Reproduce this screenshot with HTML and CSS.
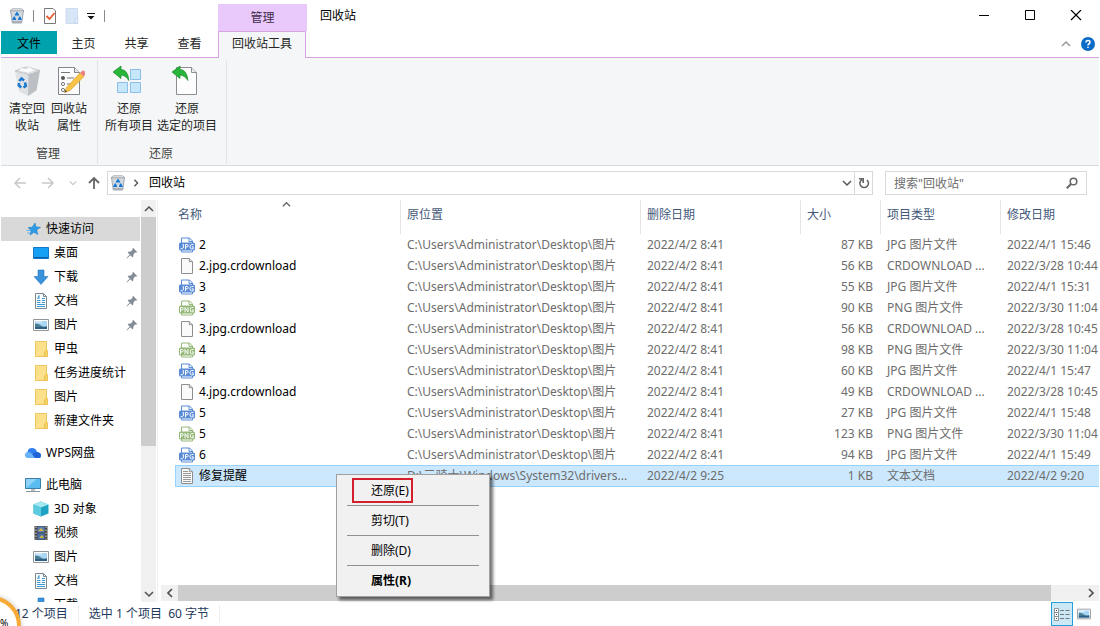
FILE: index.html
```html
<!DOCTYPE html>
<html lang="zh-CN">
<head>
<meta charset="utf-8">
<title>回收站</title>
<link rel="stylesheet" href="styles.css">
</head>
<body>
<svg class="defs" aria-hidden="true">
  <symbol id="bin" viewBox="0 0 16 16">
    <path d="M1.500 2.500l1.800 12.500h9.400l1.800-12.500z" fill="#d3d9df" stroke="#9aa0a8" stroke-width=".9"/>
    <path d="M3 13h10v2H3z" fill="#a9afb5"/>
    <path d="M1 2.800L3.500.8h9L15 2.800z" fill="#eceeef" stroke="#979ca1" stroke-width=".8"/>
    <path d="M6.400 7.600L8 5.200l1.600 2.400M10.300 8.600l1.300 2.600H9M5.700 8.600l-1.300 2.600H7" fill="none" stroke="#1677d2" stroke-width="1.800"/>
  </symbol>
  <symbol id="bin-big" viewBox="0 0 32 32">
    <path d="M4 6l14 3.500L17 31l-9-4.500z" fill="#dfe2e5"/>
    <path d="M17.500 9.500L29 5.500l-3.500 20L17 31z" fill="#bcc0c5"/>
    <path d="M4 6l14 3.500L29 5.500 15 2z" fill="#eceef0" stroke="#b5b9be" stroke-width=".8"/>
    <path d="M7 6l4-3.500 4 1.500 3-2.500 4 2.500 4 .8-8.500 3.400z" fill="#fafbfc" stroke="#c9cdd1" stroke-width=".7"/>
    <path d="M8.300 16l2.200-2.500 2.500 2M14 17.500l.8 3.500-2.300 1.500M10.300 22.500L7.800 20.500l.2-2.500" fill="none" stroke="#1b78d0" stroke-width="2.600"/>
  </symbol>
  <symbol id="props" viewBox="0 0 32 32">
    <path d="M5.500 2.500h16l5 5v22h-21z" fill="#fcfcfc" stroke="#82868a"/>
    <path d="M21.500 2.500v5h5" fill="#e5e7e9" stroke="#82868a"/>
    <path d="M8 7.500h9M14 13h7M14 19h6M14 25h3" stroke="#777"/>
    <circle cx="10" cy="13" r="2" fill="#555"/><circle cx="10" cy="19" r="1.600" fill="#fff" stroke="#777"/><circle cx="10" cy="25" r="1.600" fill="#fff" stroke="#777"/>
    <path d="M11.500 27.500l2-5L27 8l4 3.500L17 25.500z" fill="#f8c445" stroke="#dd9e2c" stroke-width=".7"/>
    <path d="M27 8l2-2q2-1 2.600.2t.3 3.300L31 11.500z" fill="#e88080"/><path d="M11.500 27.500l1-2.500 1.600 1.500z" fill="#444"/>
  </symbol>
  <symbol id="restore-all" viewBox="0 0 32 32">
    <path d="M17.500 4.500h10v10h-10zM4.500 17.500h10v10h-10zM17.500 17.500h10v10h-10z" fill="#c5e6fb" stroke="#8bbfe6"/>
    <path d="M0 7l8-6v3.500q7 0 7.800 11Q13 10.500 8 10v3.500z" fill="#29b43a" stroke="#148a27" stroke-width=".7"/>
  </symbol>
  <symbol id="restore-one" viewBox="0 0 32 32">
    <path d="M5.500 2.500h15l5 5v22h-20z" fill="#fdfdfd" stroke="#8b8f93"/>
    <path d="M20.500 2.500v5h5" fill="#eceeef" stroke="#8b8f93"/>
    <path d="M1 7l8-6v3.500q7 0 7.800 11Q14 10.500 9 10v3.500z" fill="#29b43a" stroke="#148a27" stroke-width=".7"/>
  </symbol>
  <symbol id="pin" viewBox="0 0 12 12">
    <path d="M7 .8L11.200 5l-1 .6-.9-.1L7.500 7.300 7.300 9.600l-.8.8L4.400 8.200.8 11.400l-.3-.3L3.700 7.500 1.600 5.400l.8-.7 2.300-.2 1.900-1.800-.2-1z" fill="#848d96"/>
  </symbol>
  <symbol id="picture" viewBox="0 0 16 16">
    <path d="M.5 2.500h15v11H.5z" fill="#fff" stroke="#8f969c"/>
    <path d="M2 4h12v8H2z" fill="#a8d6f4"/><path d="M2 6.500q4 0 6 2t6 .5V12H2z" fill="#4a7f96"/><path d="M2 10h12v2H2z" fill="#2d5f86"/><path d="M3 5h6" stroke="#eef8fe"/>
  </symbol>
  <symbol id="doc" viewBox="0 0 16 16">
    <path d="M2.500.5h8l3 3v12h-11z" fill="#fff" stroke="#7d868c"/><path d="M10.500.5v3h3" fill="none" stroke="#7d868c"/>
    <path d="M4 7.500h3.500M9 5.500h3M9 7.500h3M4 9.500h3.500M9 9.500h3M4 11.500h8M4 13.500h8" stroke="#3d97d2"/><path d="M4.500 6l1.500-3.500V6" fill="none" stroke="#3d97d2"/>
  </symbol>
  <symbol id="folder" viewBox="0 0 16 16">
    <path d="M2 .5h12v15H2z" fill="#fde08a"/><path d="M2.500.5h11v15H2.500z" fill="none" stroke="#edc75e"/><path d="M11.700 15.500V11l1.300-1.500h1.500v6z" fill="#f8d264" stroke="#e3b63e" stroke-width=".7"/>
  </symbol>
  <symbol id="arrow-down" viewBox="0 0 16 16"><path d="M5 1h6v6.500h4L8 15.500 1 7.500h4z" fill="#3a92dc" stroke="#2a78bd" stroke-width=".6"/></symbol>
  <symbol id="file" viewBox="0 0 16 16"><path d="M2.500.5h7.800l3.200 3.200v11.800h-11z" fill="#fafafa" stroke="#8e8e8e"/><path d="M10.300.5v3.200h3.200" fill="#e6e6e6" stroke="#8e8e8e"/></symbol>
  <symbol id="text-file" viewBox="0 0 16 16"><path d="M2.500.5h7.800l3.200 3.200v11.800h-11z" fill="#fafafa" stroke="#8e8e8e"/><path d="M10.300.5v3.200h3.200" fill="#e6e6e6" stroke="#8e8e8e"/><path d="M4 3.500h5M4 5.500h8M4 7.500h8M4 9.500h8M4 11.500h8M4 13.500h8" stroke="#999"/></symbol>
  <symbol id="jpg" viewBox="0 0 16 16">
    <path d="M2.500 7V1h8l3 3v3M2.500 12v3h11v-3" fill="#fff" stroke="#5a8bd6"/><path d="M10 1v3.500h3.500" fill="none" stroke="#5a8bd6"/>
    <rect x="0" y="5.500" width="16" height="8" rx="1.500" fill="#5a8bd6"/>
    <path d="M4.300 7v4q0 1-2.800.8M6.500 12.300V7.500h1.700q1 0 1 1.200t-1 1.200H6.500M14.500 7.500h-2q-1.500 0-1.500 2.200t1.500 2.200h1.700V9.800h-1.400" fill="none" stroke="#fff"/>
  </symbol>
  <symbol id="png" viewBox="0 0 16 16">
    <path d="M2.500 7V1h8l3 3v3M2.500 12v3h11v-3" fill="#fff" stroke="#94b878"/><path d="M10 1v3.500h3.500" fill="none" stroke="#94b878"/>
    <rect x="0" y="5.500" width="16" height="8" rx="1.500" fill="#94b878"/>
    <path d="M1.500 12.300V7.500h1.700q1 0 1 1.200t-1 1.200H1.500M6 12.300V7.500l3 4.500V7M14.500 7.500h-1.700q-1.500 0-1.500 2.200t1.500 2.200h1.400V9.800h-1" fill="none" stroke="#fff"/>
  </symbol>
  <symbol id="chev-up" viewBox="0 0 10 10"><path d="M1 7l4-4 4 4" fill="none" stroke="currentColor" stroke-width="1.500"/></symbol>
  <symbol id="chev-down" viewBox="0 0 10 10"><path d="M1 3l4 4 4-4" fill="none" stroke="currentColor" stroke-width="1.500"/></symbol>
  <symbol id="chev-left" viewBox="0 0 10 10"><path d="M7 1L3 5l4 4" fill="none" stroke="currentColor" stroke-width="1.700"/></symbol>
  <symbol id="chev-right" viewBox="0 0 10 10"><path d="M3 1l4 4-4 4" fill="none" stroke="currentColor" stroke-width="1.700"/></symbol>
</svg>

<header class="titlebar">
  <div class="quick">
    <svg class="i16"><use href="#bin"/></svg>
    <span class="sep"></span>
    <button class="bare" aria-label="属性"><svg class="i16" viewBox="0 0 16 16"><path d="M2.500.5h8.500l2.500 2.500v12.500h-11z" fill="#fff" stroke="#777"/><path d="M4.500 8l3 3 5-6" fill="none" stroke="#e2592d" stroke-width="1.800"/></svg></button>
    <button class="bare" aria-label="新建文件夹"><svg class="i16" viewBox="0 0 16 16"><path d="M2 .5h11.500v15H2z" fill="#d8e6f8" stroke="#c4d5ec" stroke-width=".8"/><path d="M11 15.500v-5h3v5z" fill="#e3edfa" stroke="#bccfe8" stroke-width=".7"/></svg></button>
    <button class="bare" aria-label="自定义快速访问工具栏"><svg class="i10" viewBox="0 0 10 10"><path d="M1 2.500h8" stroke="#111"/><path d="M1.500 5h7L5 8.500z" fill="#111"/></svg></button>
    <span class="sep"></span>
  </div>
  <div class="context-label">管理</div>
  <div class="title">回收站</div>
  <div class="window-buttons">
    <button class="bare" aria-label="最小化"><svg class="i12" viewBox="0 0 12 12"><path d="M1 5.500h10" stroke="#000"/></svg></button>
    <button class="bare" aria-label="最大化"><svg class="i12" viewBox="0 0 12 12"><path d="M1.500.5h9v9h-9z" fill="none" stroke="#000"/></svg></button>
    <button class="bare" aria-label="关闭"><svg class="i12" viewBox="0 0 12 12"><path d="M1 0l10 10M11 0L1 10" stroke="#000" stroke-width="1.200"/></svg></button>
  </div>
</header>

<nav class="tabs">
  <button class="tab file">文件</button>
  <button class="tab">主页</button>
  <button class="tab">共享</button>
  <button class="tab">查看</button>
  <button class="tab active">回收站工具</button>
  <div class="help">
    <button class="bare collapse" aria-label="折叠功能区"><svg class="i10"><use href="#chev-up"/></svg></button>
    <button class="bare" aria-label="帮助"><svg class="i14" viewBox="0 0 14 14"><circle cx="7" cy="7" r="7" fill="#0b6cc8"/><path d="M5 5.500Q5 3.500 7 3.500t2 1.700Q9 6.300 7.800 7 7 7.500 7 8.500M7 9.700v1.400" fill="none" stroke="#fff" stroke-width="1.500"/></svg></button>
  </div>
</nav>

<section class="ribbon">
  <div class="group">
    <div class="tools">
      <button class="tool"><svg class="i32"><use href="#bin-big"/></svg>清空回<br>收站</button>
      <button class="tool"><svg class="i32"><use href="#props"/></svg>回收站<br>属性</button>
    </div>
    <div class="group-name">管理</div>
  </div>
  <div class="group">
    <div class="tools">
      <button class="tool wide"><svg class="i32"><use href="#restore-all"/></svg>还原<br>所有项目</button>
      <button class="tool wider"><svg class="i32"><use href="#restore-one"/></svg>还原<br>选定的项目</button>
    </div>
    <div class="group-name">还原</div>
  </div>
</section>

<div class="address-row">
  <div class="nav-buttons">
    <button class="bare off" aria-label="后退"><svg class="i14" viewBox="0 0 14 14"><path d="M13 7H2M7 2L2 7l5 5" fill="none" stroke="currentColor" stroke-width="1.500"/></svg></button>
    <button class="bare off" aria-label="前进"><svg class="i14" viewBox="0 0 14 14"><path d="M1 7h11M7 2l5 5-5 5" fill="none" stroke="currentColor" stroke-width="1.500"/></svg></button>
    <button class="bare off small" aria-label="最近浏览的位置"><svg class="i8"><use href="#chev-down"/></svg></button>
    <button class="bare up" aria-label="上移"><svg class="i14" viewBox="0 0 14 14"><path d="M7 13V2M2 7l5-5 5 5" fill="none" stroke="currentColor" stroke-width="1.800"/></svg></button>
  </div>
  <div class="address">
    <svg class="i16"><use href="#bin"/></svg>
    <svg class="i8 crumb"><use href="#chev-right"/></svg>
    <span class="place">回收站</span>
    <button class="bare" aria-label="历史记录"><svg class="i10"><use href="#chev-down"/></svg></button>
    <button class="bare refresh" aria-label="刷新"><svg class="i12" viewBox="0 0 12 12"><path d="M9 3A4.300 4.300 0 1 1 4 2.500M1 1.800h4.200V6" fill="none" stroke="#666" stroke-width="1.600"/></svg></button>
  </div>
  <div class="search">
    <input type="text" aria-label="搜索" placeholder='搜索"回收站"'>
    <svg class="i12" viewBox="0 0 12 12"><circle cx="7.500" cy="4.500" r="3.300" fill="none" stroke="#666" stroke-width="1.500"/><path d="M5 7L.8 11.200" stroke="#666" stroke-width="2"/></svg>
  </div>
</div>

<main class="main">
  <aside class="side">
    <ul class="tree">
      <li class="root current"><svg class="i16" viewBox="0 0 16 16"><path d="M10 2l1 4 4.500.3-3.800 2.600 1.100 4.600L9 11.300 5 14l1.200-4.600L3 6.600l4.200-.3z" fill="#2e9be6" stroke="#1f7fc6" stroke-width=".6"/><path d="M1.500 9.500h4M2.500 12h3" stroke="#5bb3ee"/></svg>快速访问</li>
      <li><svg class="i16" viewBox="0 0 16 16"><path d="M.5 2.500h15v11H.5z" fill="#159ff5" stroke="#1278c8"/><path d="M1 12.500h14" stroke="#0b5ea6"/></svg>桌面<svg class="pin"><use href="#pin"/></svg></li>
      <li><svg class="i16"><use href="#arrow-down"/></svg>下载<svg class="pin"><use href="#pin"/></svg></li>
      <li><svg class="i16"><use href="#doc"/></svg>文档<svg class="pin"><use href="#pin"/></svg></li>
      <li><svg class="i16"><use href="#picture"/></svg>图片<svg class="pin"><use href="#pin"/></svg></li>
      <li><svg class="i16"><use href="#folder"/></svg>甲虫</li>
      <li><svg class="i16"><use href="#folder"/></svg>任务进度统计</li>
      <li><svg class="i16"><use href="#folder"/></svg>图片</li>
      <li><svg class="i16"><use href="#folder"/></svg>新建文件夹</li>
      <li class="root gap"><svg class="i16" viewBox="0 0 16 16"><path d="M3 13a3 3 0 0 1-.5-5.800Q3 3 7 3t5 4q4 .5 4 3.500T13 13z" fill="#2f7ff0"/><path d="M3 13a3 3 0 0 1 0-6q3 0 5 3l2.500 3z" fill="#6ab4fb"/><path d="M7.500 9.500Q9 7 12 7q4 .5 4 3.500T13 13h-3z" fill="#1f62d8"/></svg>WPS网盘</li>
      <li class="root gap"><svg class="i16" viewBox="0 0 16 16"><path d="M.5 1.500h15v10H.5z" fill="#5bbcf2" stroke="#3b7ea6"/><path d="M1 11L12 2H1z" fill="#8fd4f8"/><path d="M6 12h4v2H6z" fill="#b8c0c6"/><path d="M1 14.500h14" stroke="#8c979e"/></svg>此电脑</li>
      <li><svg class="i16" viewBox="0 0 16 16"><path d="M8 .5l7.500 3v9L8 15.500l-7.500-3v-9z" fill="#1fa3c4"/><path d="M.5 3.500l7.500 3 7.500-3L8 .5z" fill="#a4e8f2"/><path d="M.5 3.500l7.500 3v9l-7.500-3z" fill="#5ccbe0"/></svg>3D 对象</li>
      <li><svg class="i16" viewBox="0 0 16 16"><path d="M1.500 1h13v14h-13z" fill="#444"/><path d="M4.500 1.500h7v6h-7z" fill="#5a7fb4"/><path d="M4.500 8.500h7v6h-7z" fill="#4a72a8"/><path d="M5 6l3-3 3 3zM6 13l3-3 2 3z" fill="#d9b23c"/><path d="M3 1.500v13M13 1.500v13" stroke="#ddd" stroke-dasharray="1.500 1.500"/></svg>视频</li>
      <li><svg class="i16"><use href="#picture"/></svg>图片</li>
      <li><svg class="i16"><use href="#doc"/></svg>文档</li>
      <li><svg class="i16"><use href="#arrow-down"/></svg>下载</li>
    </ul>
    <div class="vscroll">
      <button class="bare" aria-label="向上滚动"><svg class="i10"><use href="#chev-up"/></svg></button>
      <div class="vthumb"></div>
      <div class="vrest"></div>
      <button class="bare" aria-label="向下滚动"><svg class="i10"><use href="#chev-down"/></svg></button>
    </div>
  </aside>

  <section class="content">
    <div class="list">
      <table class="files">
        <colgroup><col class="c-name"><col class="c-from"><col class="c-deleted"><col class="c-size"><col class="c-type"><col></colgroup>
        <thead><tr><th>名称<svg class="sort"><use href="#chev-up"/></svg></th><th>原位置</th><th>删除日期</th><th>大小</th><th>项目类型</th><th>修改日期</th></tr></thead>
        <tbody>
          <tr><td><span class="name"><svg class="i16"><use href="#jpg"/></svg>2</span></td><td>C:\Users\Administrator\Desktop\图片</td><td>2022/4/2 8:41</td><td>87 KB</td><td>JPG 图片文件</td><td>2022/4/1 15:46</td></tr>
          <tr><td><span class="name"><svg class="i16"><use href="#file"/></svg>2.jpg.crdownload</span></td><td>C:\Users\Administrator\Desktop\图片</td><td>2022/4/2 8:41</td><td>56 KB</td><td>CRDOWNLOAD ...</td><td>2022/3/28 10:44</td></tr>
          <tr><td><span class="name"><svg class="i16"><use href="#jpg"/></svg>3</span></td><td>C:\Users\Administrator\Desktop\图片</td><td>2022/4/2 8:41</td><td>55 KB</td><td>JPG 图片文件</td><td>2022/4/1 15:31</td></tr>
          <tr><td><span class="name"><svg class="i16"><use href="#png"/></svg>3</span></td><td>C:\Users\Administrator\Desktop\图片</td><td>2022/4/2 8:41</td><td>90 KB</td><td>PNG 图片文件</td><td>2022/3/30 11:04</td></tr>
          <tr><td><span class="name"><svg class="i16"><use href="#file"/></svg>3.jpg.crdownload</span></td><td>C:\Users\Administrator\Desktop\图片</td><td>2022/4/2 8:41</td><td>56 KB</td><td>CRDOWNLOAD ...</td><td>2022/3/28 10:45</td></tr>
          <tr><td><span class="name"><svg class="i16"><use href="#png"/></svg>4</span></td><td>C:\Users\Administrator\Desktop\图片</td><td>2022/4/2 8:41</td><td>98 KB</td><td>PNG 图片文件</td><td>2022/3/30 11:04</td></tr>
          <tr><td><span class="name"><svg class="i16"><use href="#jpg"/></svg>4</span></td><td>C:\Users\Administrator\Desktop\图片</td><td>2022/4/2 8:41</td><td>60 KB</td><td>JPG 图片文件</td><td>2022/4/1 15:47</td></tr>
          <tr><td><span class="name"><svg class="i16"><use href="#file"/></svg>4.jpg.crdownload</span></td><td>C:\Users\Administrator\Desktop\图片</td><td>2022/4/2 8:41</td><td>49 KB</td><td>CRDOWNLOAD ...</td><td>2022/3/28 10:45</td></tr>
          <tr><td><span class="name"><svg class="i16"><use href="#jpg"/></svg>5</span></td><td>C:\Users\Administrator\Desktop\图片</td><td>2022/4/2 8:41</td><td>27 KB</td><td>JPG 图片文件</td><td>2022/4/1 15:48</td></tr>
          <tr><td><span class="name"><svg class="i16"><use href="#png"/></svg>5</span></td><td>C:\Users\Administrator\Desktop\图片</td><td>2022/4/2 8:41</td><td>123 KB</td><td>PNG 图片文件</td><td>2022/3/30 11:04</td></tr>
          <tr><td><span class="name"><svg class="i16"><use href="#jpg"/></svg>6</span></td><td>C:\Users\Administrator\Desktop\图片</td><td>2022/4/2 8:41</td><td>94 KB</td><td>JPG 图片文件</td><td>2022/4/1 15:49</td></tr>
          <tr class="selected"><td><span class="name"><svg class="i16"><use href="#text-file"/></svg>修复提醒</span></td><td>D:\三骑士\Windows\System32\drivers...</td><td>2022/4/2 9:25</td><td>1 KB</td><td>文本文档</td><td>2022/4/2 9:20</td></tr>
        </tbody>
      </table>
    </div>
    <div class="hscroll">
      <button class="bare" aria-label="向左滚动"><svg class="i10"><use href="#chev-left"/></svg></button>
      <div class="hthumb"></div>
      <div class="hrest"></div>
      <button class="bare" aria-label="向右滚动"><svg class="i10"><use href="#chev-right"/></svg></button>
    </div>
  </section>
</main>

<footer class="status">
  <span class="count">12 个项目</span>
  <span class="picked">选中 1 个项目&nbsp; 60 字节</span>
  <div class="views">
    <button class="view on" aria-label="详细信息"><svg class="i16" viewBox="0 0 16 16"><path d="M.5 2.500h4v4h-4zM.5 6.500h4v4h-4zM.5 10.500h4v4h-4z" fill="#fff" stroke="#8a8f94" stroke-width=".9"/><path d="M2 4.500h1M2 8.500h1M2 12.500h1" stroke="#444"/><path d="M6 4.500h4M11.500 4.500h4M6 8.500h4M11.500 8.500h4M6 12.500h4M11.500 12.500h4" stroke="#777"/></svg></button>
    <button class="view" aria-label="大缩略图"><svg class="i14"><use href="#picture"/></svg></button>
  </div>
</footer>

<div class="menu" role="menu">
  <button class="menu-item framed" role="menuitem">还原(E)</button>
  <hr>
  <button class="menu-item" role="menuitem">剪切(T)</button>
  <hr>
  <button class="menu-item" role="menuitem">删除(D)</button>
  <hr>
  <button class="menu-item strong" role="menuitem">属性(R)</button>
</div>

<div class="gauge">%</div>
</body>
</html>
```
FILE: styles.css
```css
* { box-sizing: border-box; }
html { height: 100%; }
body {
  margin: 0;
  padding: 0 1px;
  height: 100%;
  display: flex;
  flex-direction: column;
  position: relative;
  overflow: hidden;
  background: #fff;
  color: #000;
  font: 12px/17px "Noto Sans", "Noto Sans CJK SC", sans-serif;
}
button, input { font: inherit; color: inherit; }
svg { display: block; flex: none; }
.defs { position: absolute; width: 0; height: 0; }
.bare {
  display: flex;
  align-items: center;
  justify-content: center;
  padding: 0;
  border: 0;
  background: none;
}
.i8 { width: 8px; height: 8px; }
.i10 { width: 10px; height: 10px; }
.i12 { width: 12px; height: 12px; }
.i14 { width: 14px; height: 14px; }
.i16 { width: 16px; height: 16px; }
.i32 { width: 32px; height: 32px; }

/* title bar */
.titlebar { display: flex; height: 31px; flex: none; }
.quick {
  display: flex;
  align-items: center;
  gap: 8px;
  width: 217px;
  padding-left: 8px;
}
.quick .sep { width: 1px; height: 12px; background: #8c8c8c; }
.quick .bare + .bare { margin-left: -2px; }
.context-label {
  width: 89px;
  margin-top: 4px;
  padding-top: 5px;
  background: #e9c9fc;
  color: #3d2b4a;
  text-align: center;
}
.title { flex: 1; padding: 7px 13px; }
.window-buttons { display: flex; }
.window-buttons .bare { width: 46px; }

/* ribbon tabs */
.tabs { display: flex; height: 27px; flex: none; border-bottom: 1px solid #d7a3e3; }
.tab {
  width: 53px;
  height: 24px;
  padding: 1px 0 0;
  border: 0;
  background: none;
  color: #262626;
}
.tab.file { width: 56px; height: 23px; background: #00a3ad; color: #000; }
.tab.active {
  width: 88px;
  height: 27px;
  margin-left: 2px;
  padding: 0 0 3px;
  border: 1px solid #d7a3e3;
  border-bottom: 0;
  background: #f5f6f7;
}
.help { display: flex; gap: 10px; margin-left: auto; padding-right: 4px; }
.collapse { color: #999; }

/* ribbon body */
.ribbon {
  display: flex;
  flex: none;
  padding: 2px 0 1px;
  background: #f5f6f7;
  border-bottom: 1px solid #dadbdc;
}
.group {
  padding: 5px 7px 2px 5px;
  border-right: 1px solid #e2e3e4;
  color: #444;
  text-align: center;
}
.tools { display: flex; }
.tool {
  width: 42px;
  padding: 0;
  border: 0;
  background: none;
  color: #262626;
  white-space: nowrap;
}
.tool svg { margin: 0 auto 3px; }
.tool.wide { width: 52px; }
.tool.wider { width: 64px; }
.group-name { margin-top: 11px; }

/* address row */
.address-row { display: flex; align-items: center; height: 34px; flex: none; padding-right: 12px; }
.nav-buttons { display: flex; width: 106px; padding-left: 12px; gap: 14px; color: #666; }
.nav-buttons .off { color: #c8c8c8; }
.nav-buttons .small { margin-right: -4px; }
.address, .search {
  display: flex;
  align-items: center;
  height: 24px;
  border: 1px solid #d9d9d9;
}
.address { flex: 1; padding-left: 2px; gap: 7px; color: #555; }
.place { flex: 1; margin-left: 2px; padding-bottom: 2px; color: #000; }
.address .refresh { width: 18px; height: 22px; margin-left: -5px; border-left: 1px solid #d9d9d9; }
.crumb { margin-left: -1px; }
.search { width: 202px; margin-left: 12px; padding: 0 8px; }
.search input {
  flex: 1;
  min-width: 0;
  padding: 0;
  border: 0;
  outline: 0;
  background: none;
}
.search input::placeholder { color: #6d6d6d; opacity: 1; }

/* body */
.main { display: flex; flex: 1; min-height: 0; }
.side { display: flex; width: 157px; flex: none; border-right: 1px solid #f0f0f0; }
.tree {
  flex: 1;
  margin: 0;
  padding: 17px 0 0;
  list-style: none;
  overflow: hidden;
}
.tree li {
  display: flex;
  align-items: center;
  gap: 5px;
  height: 24px;
  padding: 0 2px 1px 32px;
}
.tree .root { padding-left: 24px; }
.tree .current { background: #d9d9d9; }
.tree .gap { margin-top: 8px; }
.pin { width: 12px; height: 12px; margin-left: auto; }
.vscroll {
  display: flex;
  flex-direction: column;
  width: 15px;
  margin: 0 1px;
  background: #f0f0f0;
  color: #505050;
}
.vscroll .bare { flex: none; width: 15px; height: 17px; }
.vthumb { flex: 228; background: #cdcdcd; }
.vrest { flex: 139; }
.content { display: flex; flex: 1; min-width: 0; flex-direction: column; padding-left: 3px; }
.list { flex: 1; min-height: 0; padding-left: 14px; overflow: hidden; }

/* file table */
.files { width: 100%; table-layout: fixed; border-collapse: separate; border-spacing: 0; }
.c-name { width: 226px; }
.c-from { width: 240px; }
.c-deleted { width: 160px; }
.c-size { width: 80px; }
.c-type { width: 120px; }
.files th {
  height: 34px;
  padding: 0 6px 5px;
  border-right: 1px solid #e5e5e5;
  color: #43587a;
  font-weight: 400;
  text-align: left;
  position: relative;
}
.files th:first-child { padding-left: 3px; }
.files th:last-child { border-right: 0; }
.sort { position: absolute; left: 107px; top: 0; width: 9px; height: 9px; color: #666; }
.files td {
  height: 21px;
  padding: 0 8px 0 6px;
  color: #6d6d6d;
  white-space: nowrap;
  overflow: hidden;
}
.files td:first-child { padding-left: 4px; color: #000; }
.files td:nth-child(4) { text-align: right; }
.files td:last-child { padding-right: 0; }
.name { display: flex; align-items: center; gap: 4px; }
.files .selected td { height: 22px; padding-bottom: 1px; background: #cce8ff; border: 1px solid #99d1ff; border-width: 1px 0; }
.files .selected td:first-child { border-left-width: 1px; padding-left: 3px; }

.hscroll { display: flex; height: 16px; flex: none; margin-bottom: 1px; background: #f0f0f0; color: #505050; }
.hscroll .bare { flex: none; width: 17px; height: 16px; }
.hthumb { flex: 874; background: #cdcdcd; }
.hrest { flex: 31; }

/* status bar */
.status { display: flex; align-items: center; height: 24px; flex: none; padding-left: 14px; color: #1e395b; }
.count, .picked { margin-bottom: 1px; border-right: 1px solid #eee; }
.count { padding-right: 10px; }
.picked { padding: 0 10px; }
.views { display: flex; margin-left: auto; padding-right: 4px; }
.view {
  display: flex;
  align-items: center;
  justify-content: center;
  width: 22px;
  height: 24px;
  padding: 0;
  border: 1px solid transparent;
  background: none;
}
.view.on { border-color: #26a0da; background: #cbe8f6; }

/* context menu over the list */
.menu {
  position: absolute;
  left: 336px;
  top: 474px;
  width: 154px;
  padding: 3px 10px;
  border: 1px solid #a0a0a0;
  background: #f1f1f1;
  box-shadow: 3px 3px 3px rgba(0, 0, 0, .55);
}
.menu hr { margin: 2px 0; border: 0; border-top: 1px solid #919191; }
.menu-item {
  display: block;
  height: 25px;
  margin-left: 5px;
  padding: 0 3px 0 19px;
  border: 0;
  background: none;
  text-align: left;
}
.menu-item.framed { padding: 0 2px 0 17px; border: 2px solid #d4202c; }
.menu-item.strong { font-weight: 700; }

/* floating gauge at the screen corner */
.gauge {
  position: absolute;
  left: -39px;
  top: 596px;
  width: 60px;
  height: 60px;
  padding: 17px 0 0 35px;
  border: 4px solid #f8aa35;
  border-radius: 50%;
  background: #fff;
  box-shadow: 0 0 5px rgba(0, 0, 0, .25);
  font-size: 10px;
  line-height: 12px;
}
```
